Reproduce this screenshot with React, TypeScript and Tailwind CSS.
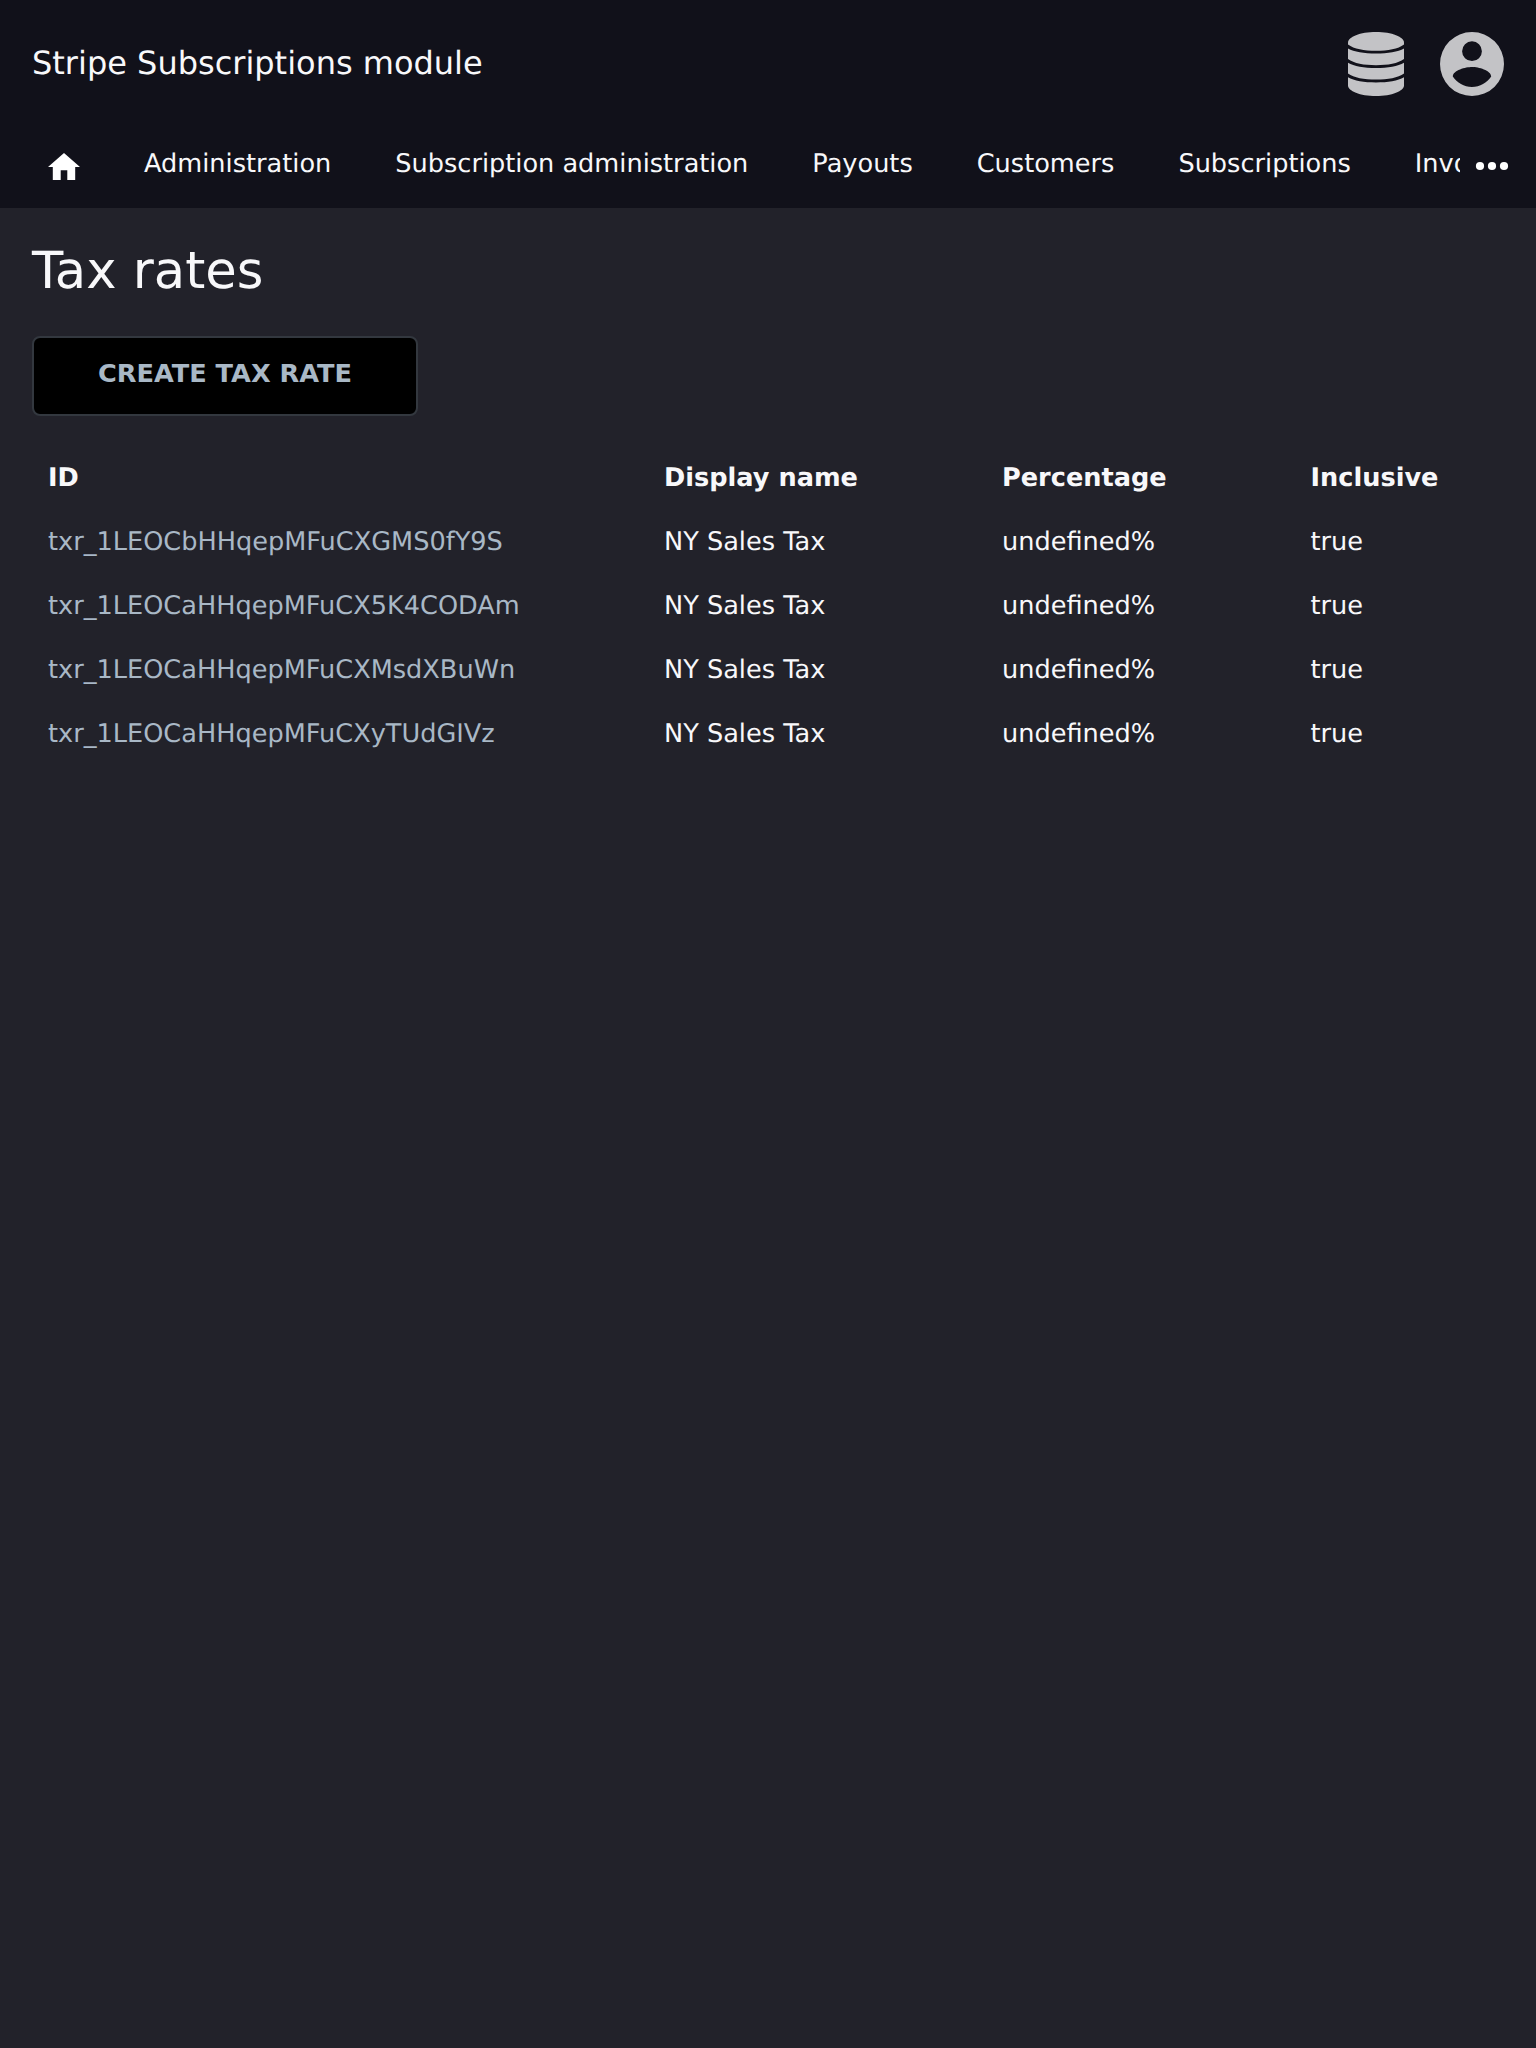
import React from "react";

const nav = ["Administration", "Subscription administration", "Payouts", "Customers", "Subscriptions", "Invoices"];
const rows = [
  "txr_1LEOCbHHqepMFuCXGMS0fY9S",
  "txr_1LEOCaHHqepMFuCX5K4CODAm",
  "txr_1LEOCaHHqepMFuCXMsdXBuWn",
  "txr_1LEOCaHHqepMFuCXyTUdGIVz",
];

export default function App() {
  return (
    <div className="h-[2048px] w-[1536px] overflow-hidden bg-[#22222a] font-['DejaVu_Sans',sans-serif] text-[25.6px] text-[#f8f8fa] [text-rendering:geometricPrecision]">
      <header className="h-[208px] bg-[#11111a]">
        <div className="flex h-32 items-center justify-between px-8">
          <div className="pb-0.5 text-[32px]">Stripe Subscriptions module</div>
          <div className="flex items-center gap-9">
            <svg viewBox="0 0 56 64" className="h-16 w-14 fill-[#c3c3c6]">
              <path d="M28 0C44 0 56 5 56 10.500V12.500C50 17 40 18.800 28 18.800S6 17 0 12.500V10.500C0 5 12 0 28 0Z" />
              <path d="M0 16.600C6 20 16 21.600 28 21.600S50 20 56 16.600V27C50 31.400 40 33.200 28 33.200S6 31.400 0 27Z" />
              <path d="M0 30.800C6 34.400 16 36 28 36S50 34.400 56 30.800V41.500C50 45.800 40 47.600 28 47.600S6 45.800 0 41.500Z" />
              <path d="M0 45.200C6 48.800 16 50.400 28 50.400S50 48.800 56 45.200V53.500C56 59 44 64 28 64S0 59 0 53.500Z" />
            </svg>
            <svg viewBox="0 0 64 64" className="h-16 w-16 fill-[#c3c3c6]">
              <path fillRule="evenodd" d="M32 0a32 32 0 1 1 0 64a32 32 0 0 1 0-64ZM32 9.300a9.900 9.900 0 1 0 0 19.800a9.900 9.900 0 0 0 0-19.800ZM12.800 44.600C17 51 24 55 32 55S47 51 51.200 44.600C51.100 38.200 38.400 35 32 35S12.900 38.200 12.800 44.600Z" />
            </svg>
          </div>
        </div>
        <nav className="flex h-20 pl-4 pr-7">
          <div className="flex w-24 justify-center">
            <svg viewBox="0 0 32 27" className="mt-[25px] h-[27px] w-8 fill-white"><path d="M12.700 27V17.300H19.300V27H27.200V14H32L16 0L0 14H4.800V27Z" /></svg>
          </div>
          <div className="mr-4 flex flex-1 gap-16 overflow-hidden whitespace-nowrap pl-8 pt-[17px]">
            {nav.map((n) => <a key={n} className="shrink-0">{n}</a>)}
          </div>
          <svg viewBox="0 0 32 8" className="mt-[34px] h-2 w-8 overflow-visible fill-white">
            <circle cx="4" cy="4" r="4.100" /><circle cx="16" cy="4" r="4.100" /><circle cx="28" cy="4" r="4.100" />
          </svg>
        </nav>
      </header>
      <main className="px-8 pt-[33px]">
        <h1 className="text-[51.2px] leading-[60px]">Tax rates</h1>
        <button className="mt-[35px] block h-20 w-[386px] rounded-lg border-2 border-[#33383f] bg-black pb-1.5 font-bold text-[#a9b8c6]">CREATE TAX RATE</button>
        <div className="mt-[30px] grid grid-cols-[616px_338px_308.500px_1fr] px-4 leading-[64px]">
          {["ID", "Display name", "Percentage", "Inclusive"].map((h) => <b key={h}>{h}</b>)}
          {rows.map((r) => (
            <React.Fragment key={r}>
              <a className="text-[#a9b8c6]">{r}</a><span>NY Sales Tax</span><span>undefined%</span><span>true</span>
            </React.Fragment>
          ))}
        </div>
      </main>
    </div>
  );
}
